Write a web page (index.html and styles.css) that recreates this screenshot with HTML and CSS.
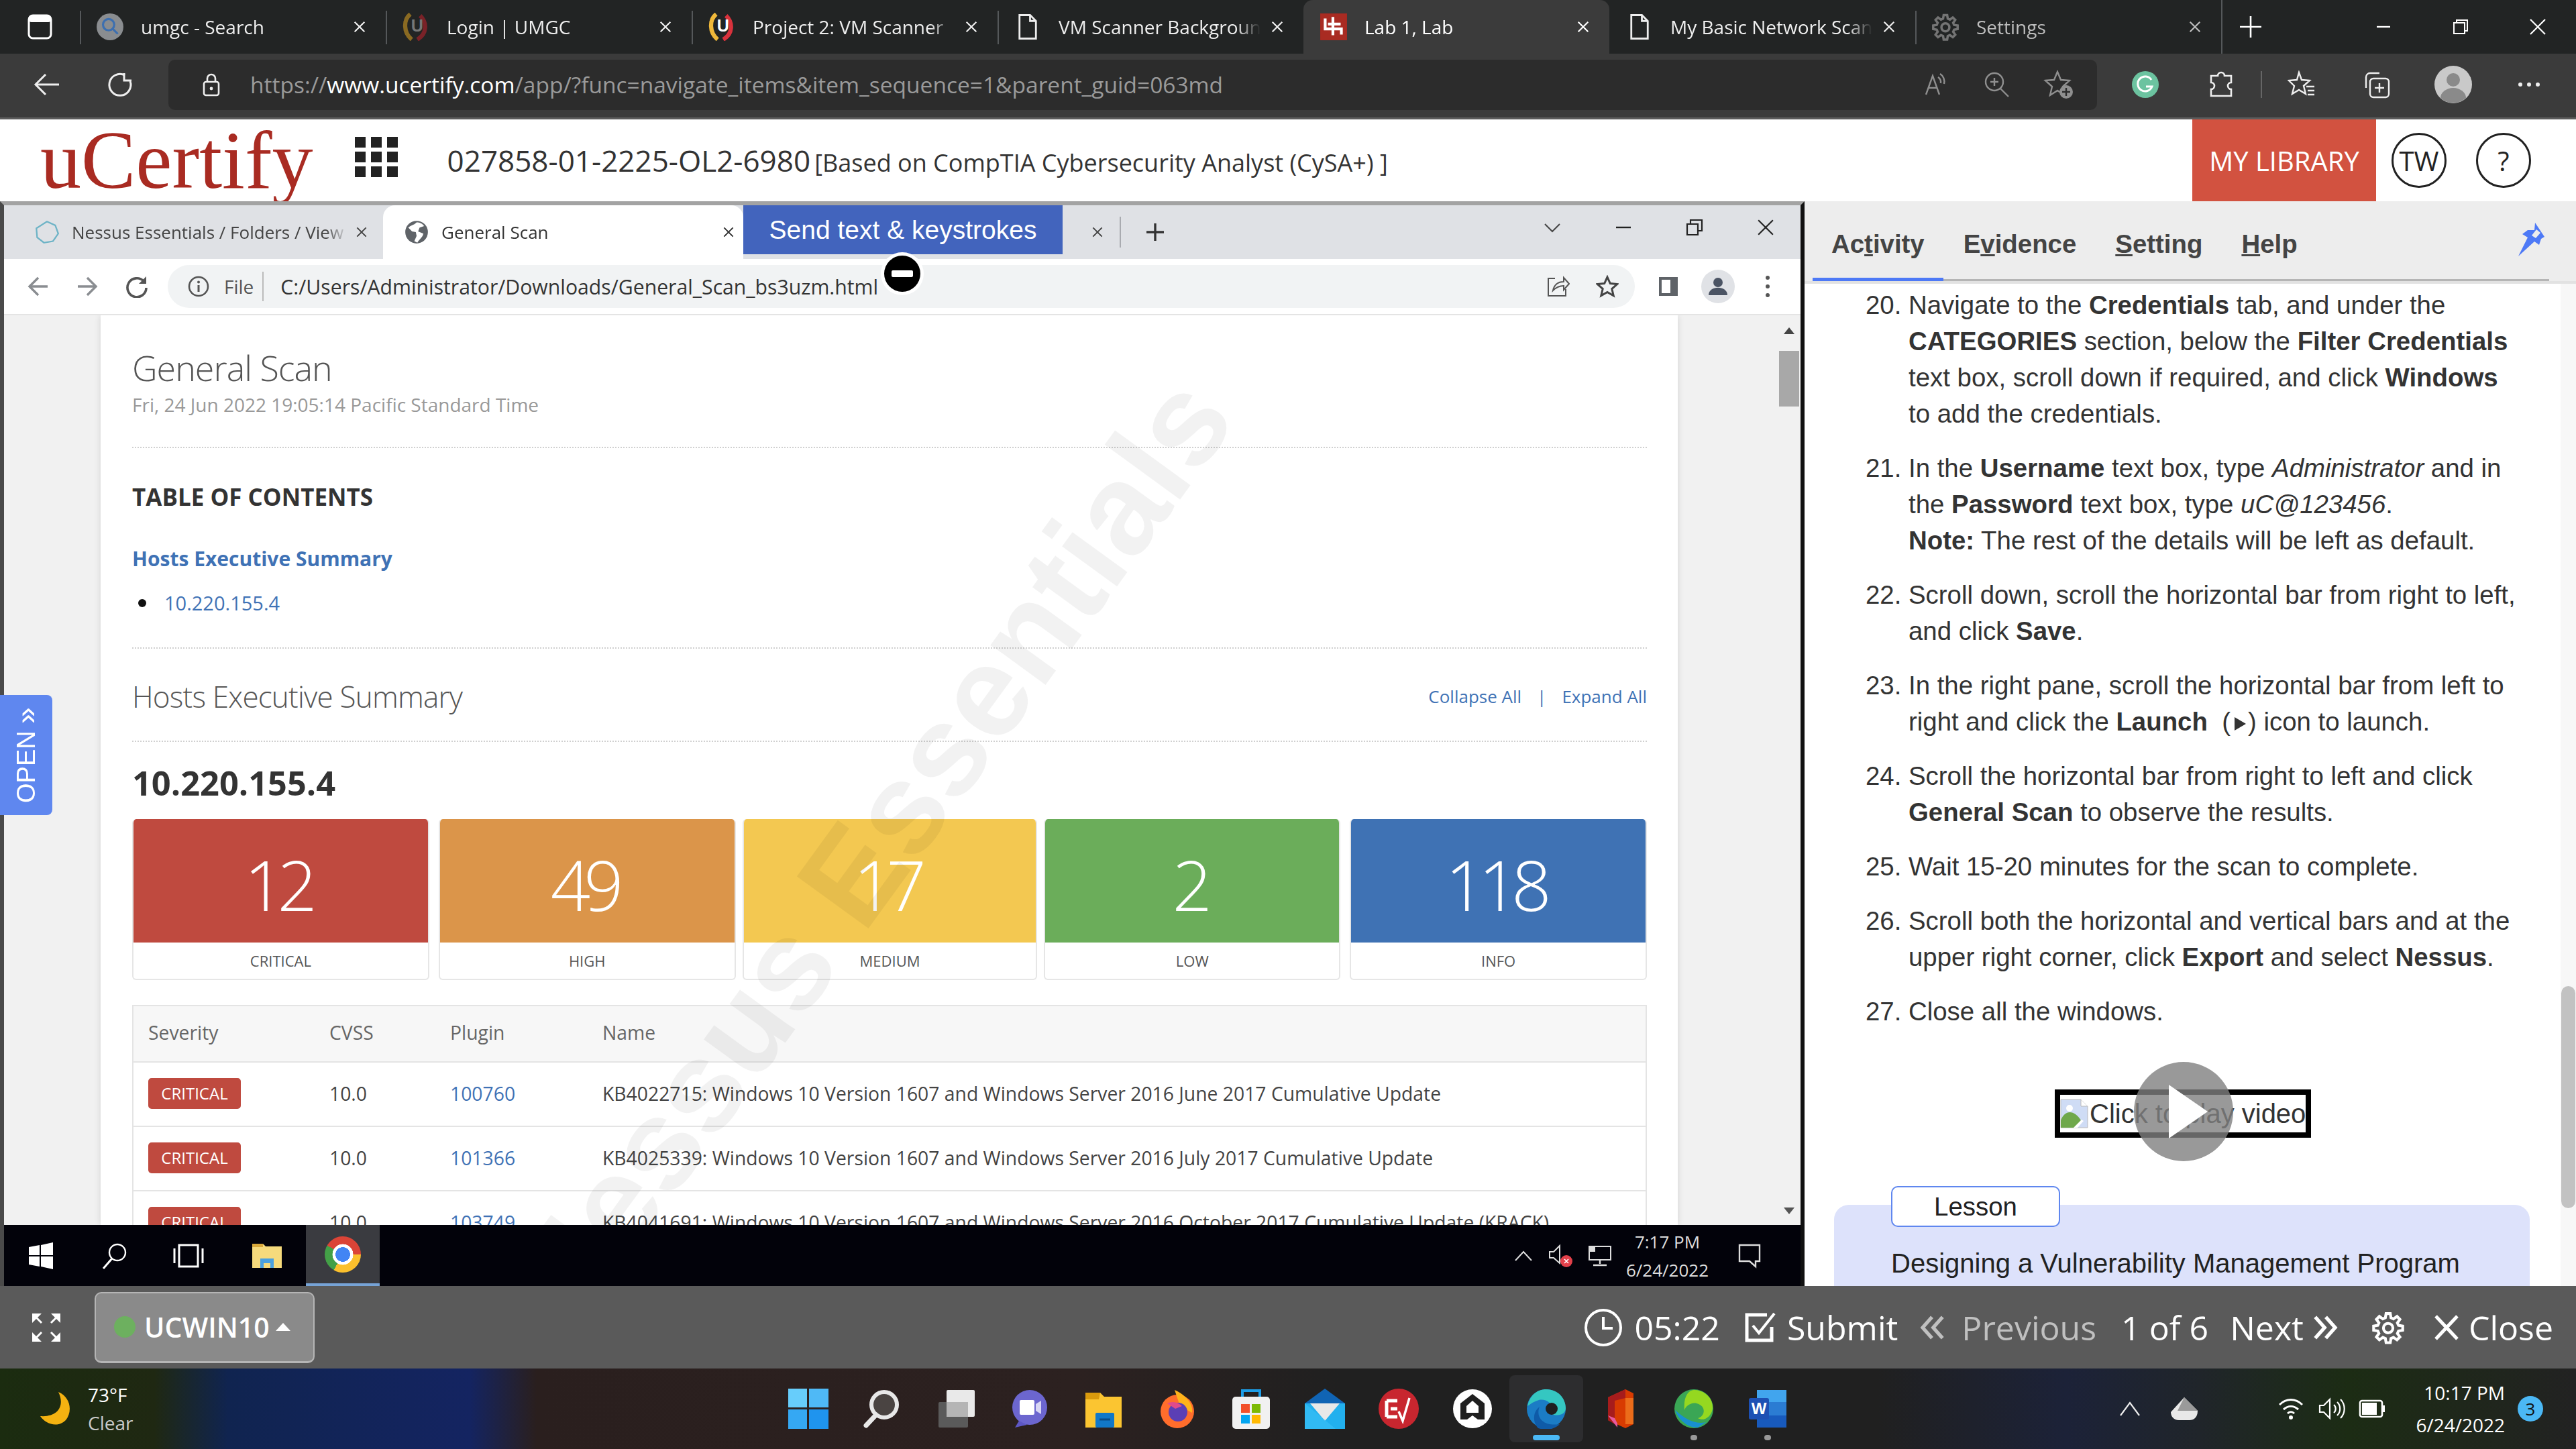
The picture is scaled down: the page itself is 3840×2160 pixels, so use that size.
FILE: index.html
```html
<!DOCTYPE html>
<html lang="en">
<head>
    <meta charset="UTF-8">
    <title>uCertify Lab 1</title>
    <link rel="stylesheet" href="styles.css">
</head>
<body>
    <svg class="sprites" xmlns="http://www.w3.org/2000/svg">
        <symbol id="x" viewBox="0 0 24 24"><path d="M4 4L20 20M20 4L4 20" fill="none" stroke="currentColor" stroke-width="2.4"/></symbol>
        <symbol id="doc" viewBox="0 0 24 24"><path d="M5 2h9l5 5v15H5zM14 2v5h5" fill="none" stroke="currentColor" stroke-width="1.6"/></symbol>
        <symbol id="gear" viewBox="0 0 24 24"><path d="M10.5 2h3l.5 3 1.8.8 2.5-1.8 2.1 2.1-1.8 2.5.8 1.8 3 .5v3l-3 .5-.8 1.8 1.8 2.5-2.1 2.1-2.5-1.8-1.8.8-.5 3h-3l-.5-3-1.8-.8-2.5 1.8-2.1-2.1 1.8-2.5-.8-1.8-3-.5v-3l3-.5.8-1.8-1.8-2.5 2.1-2.1 2.5 1.8 1.8-.8z" fill="none" stroke="currentColor" stroke-width="2"/><circle cx="12" cy="12.4" r="3.4" fill="none" stroke="currentColor" stroke-width="2"/></symbol>
        <symbol id="chev" viewBox="0 0 24 24"><path d="M3 3l8 9-8 9M12 3l8 9-8 9" fill="none" stroke="currentColor" stroke-width="3"/></symbol>
        <symbol id="chevl" viewBox="0 0 24 24"><path d="M21 3l-8 9 8 9M12 3l-8 9 8 9" fill="none" stroke="currentColor" stroke-width="3"/></symbol>
    </svg>

    <!-- Edge tab strip -->
    <div class="tabstrip">
        <div class="strip-start">
            <svg width="38" height="40" viewBox="0 0 38 40"><rect x="2" y="3" width="33" height="34" rx="6" fill="none" stroke="#fff" stroke-width="3"/><rect x="2" y="3" width="33" height="10" rx="4" fill="#fff"/></svg>
        </div>
        <div class="tab">
            <svg class="tab-icon" viewBox="0 0 40 40"><circle cx="20" cy="20" r="19" fill="#8a8d90"/><circle cx="18" cy="17" r="8" fill="none" stroke="#3c6fb0" stroke-width="3"/><path d="M24 23l7 7" stroke="#3c6fb0" stroke-width="3"/></svg>
            <span class="tab-title">umgc - Search</span>
            <svg class="tab-x" width="22" height="22"><use href="#x"/></svg>
        </div>
        <div class="tab">
            <svg class="tab-icon" viewBox="0 0 40 40"><path d="M12 2C2 10 2 28 14 38" fill="none" stroke="#8a6a22" stroke-width="6"/><path d="M26 4C36 14 36 30 22 38" fill="none" stroke="#7a2228" stroke-width="6"/><text x="13" y="27" class="fav-letter fav-dim">U</text></svg>
            <span class="tab-title">Login | UMGC</span>
            <svg class="tab-x" width="22" height="22"><use href="#x"/></svg>
        </div>
        <div class="tab">
            <svg class="tab-icon" viewBox="0 0 40 40"><path d="M12 2C2 10 2 28 14 38" fill="none" stroke="#f0b93a" stroke-width="6"/><path d="M26 4C36 14 36 30 22 38" fill="none" stroke="#d8323c" stroke-width="6"/><text x="13" y="27" class="fav-letter">U</text></svg>
            <span class="tab-title">Project 2: VM Scanner</span>
            <svg class="tab-x" width="22" height="22"><use href="#x"/></svg>
        </div>
        <div class="tab no-sep-right">
            <svg class="tab-icon" viewBox="0 0 24 24"><use href="#doc"/></svg>
            <span class="tab-title">VM Scanner Background</span>
            <svg class="tab-x" width="22" height="22"><use href="#x"/></svg>
        </div>
        <div class="tab tab-active">
            <svg class="tab-icon" viewBox="0 0 40 40"><rect x="1" y="1" width="38" height="38" fill="#a92b22"/><path d="M8 8v15h9M19 6v26M12 16h18M19 23h12v8" fill="none" stroke="#fff" stroke-width="4"/></svg>
            <span class="tab-title">Lab 1, Lab</span>
            <svg class="tab-x" width="22" height="22"><use href="#x"/></svg>
        </div>
        <div class="tab">
            <svg class="tab-icon" viewBox="0 0 24 24"><use href="#doc"/></svg>
            <span class="tab-title">My Basic Network Scan</span>
            <svg class="tab-x" width="22" height="22"><use href="#x"/></svg>
        </div>
        <div class="tab tab-dim">
            <svg class="tab-icon" viewBox="0 0 24 24"><use href="#gear"/></svg>
            <span class="tab-title">Settings</span>
            <svg class="tab-x" width="22" height="22"><use href="#x"/></svg>
        </div>
        <div class="strip-end">
            <svg class="new-tab" width="36" height="36" viewBox="0 0 36 36"><path d="M18 2v32M2 18h32" stroke="#fff" stroke-width="2.6"/></svg>
            <div class="win-btns">
                <svg width="26" height="26" viewBox="0 0 26 26"><path d="M3 13h20" stroke="#fff" stroke-width="2.4"/></svg>
                <svg width="26" height="26" viewBox="0 0 26 26"><path d="M3 7h16v16H3zM7 7V3h16v16h-4" fill="none" stroke="#fff" stroke-width="2"/></svg>
                <svg width="26" height="26" viewBox="0 0 26 26"><path d="M2 2L24 24M24 2L2 24" stroke="#fff" stroke-width="2.2"/></svg>
            </div>
        </div>
    </div>

    <!-- Edge address bar -->
    <div class="toolbar">
        <svg class="tool-back" width="40" height="36" viewBox="0 0 40 36"><path d="M18 3L3 18l15 15M3 18h35" fill="none" stroke="#eee" stroke-width="3"/></svg>
        <svg class="tool-reload" width="40" height="40" viewBox="0 0 40 40"><path d="M26 6a16 16 0 1 0 8 9" fill="none" stroke="#eee" stroke-width="3"/><path d="M25 3v11h11" fill="none" stroke="#eee" stroke-width="3"/></svg>
        <div class="address">
            <svg class="addr-lock" width="28" height="36" viewBox="0 0 28 36"><rect x="3" y="14" width="22" height="20" rx="3" fill="none" stroke="#eee" stroke-width="2.6"/><path d="M8 14V9a6 6 0 0 1 12 0v5" fill="none" stroke="#eee" stroke-width="2.6"/><circle cx="14" cy="24" r="2.4" fill="#eee"/></svg>
            <span class="addr-url">https://<b>www.ucertify.com</b>/app/?func=navigate_items&amp;item_sequence=1&amp;parent_guid=063md</span>
            <div class="addr-tools">
                <svg width="42" height="42" viewBox="0 0 42 42"><path d="M5 36L15 8l10 28M9 26h12M26 5a14 14 0 0 1 6 15M23 10a9 9 0 0 1 4 9" fill="none" stroke="#8f8f8f" stroke-width="2.4"/></svg>
                <svg width="42" height="42" viewBox="0 0 42 42"><circle cx="17" cy="17" r="13" fill="none" stroke="#8f8f8f" stroke-width="2.4"/><path d="M26 27l12 12M11 17h12M17 11v12" fill="none" stroke="#8f8f8f" stroke-width="2.4"/></svg>
                <svg width="46" height="44" viewBox="0 0 46 44"><path d="M21 3l5 12 13 1-10 9 3 13-11-7-11 7 3-13L3 16l13-1z" fill="none" stroke="#8f8f8f" stroke-width="2.4"/><circle cx="34" cy="33" r="10" fill="#8f8f8f"/><path d="M34 27v12M28 33h12" stroke="#2c2c2c" stroke-width="2.4"/></svg>
            </div>
        </div>
        <div class="tool-slot">
            <svg width="40" height="40" viewBox="0 0 40 40"><circle cx="20" cy="20" r="20" fill="#6cc3a0"/><path d="M29 13a11 11 0 1 0 1 10H21" fill="none" stroke="#fff" stroke-width="3"/></svg>
        </div>
        <div class="tool-slot">
            <svg width="42" height="42" viewBox="0 0 42 42"><path d="M16 8a5 5 0 0 1 10 0h10v10a5 5 0 0 0 0 10v10H6V28a5 5 0 0 0 0-10V8z" fill="none" stroke="#eee" stroke-width="2.6"/></svg>
        </div>
        <span class="tool-sep"></span>
        <div class="tool-slot">
            <svg width="42" height="42" viewBox="0 0 42 42"><path d="M17 3l4 11 12 1-9 8 3 12-10-6-10 6 3-12-8-8 12-1zM28 24h12M30 30h10M30 36h10" fill="none" stroke="#eee" stroke-width="2.4"/></svg>
        </div>
        <div class="tool-slot">
            <svg width="42" height="42" viewBox="0 0 42 42"><path d="M24 4H10a6 6 0 0 0-6 6v16" fill="none" stroke="#eee" stroke-width="2.4"/><rect x="10" y="12" width="28" height="28" rx="5" fill="none" stroke="#eee" stroke-width="2.4"/><path d="M24 19v14M17 26h14" stroke="#eee" stroke-width="2.4"/></svg>
        </div>
        <div class="tool-slot">
            <svg width="56" height="56" viewBox="0 0 56 56"><circle cx="28" cy="28" r="28" fill="#c9c9c9"/><circle cx="28" cy="21" r="10" fill="#8a8a8a"/><path d="M9 48a19 15 0 0 1 38 0 28 28 0 0 1-38 0z" fill="#8a8a8a"/></svg>
        </div>
        <div class="tool-slot">
            <svg width="36" height="10" viewBox="0 0 36 10"><circle cx="5" cy="5" r="3" fill="#eee"/><circle cx="18" cy="5" r="3" fill="#eee"/><circle cx="31" cy="5" r="3" fill="#eee"/></svg>
        </div>
    </div>

    <!-- uCertify header -->
    <header class="appbar">
        <span class="logo">uCertify</span>
        <div class="grid-btn">
            <i></i><i></i><i></i><i></i><i></i><i></i><i></i><i></i><i></i>
        </div>
        <div class="course"><span class="course-code">027858-01-2225-OL2-6980</span> <span class="course-name">[Based on CompTIA Cybersecurity Analyst (CySA+) ]</span></div>
        <a class="my-library">MY LIBRARY</a>
        <span class="round-btn">TW</span>
        <span class="round-btn round-help">?</span>
    </header>

    <div class="workspace">
        <!-- Remote desktop view -->
        <section class="remote">
            <div class="rc-tabs">
                <div class="rc-tab">
                    <svg class="rc-fav" viewBox="0 0 32 32"><path d="M16 2l11 5 4 11-7 10-12 2L3 23 2 11z" fill="none" stroke="#6db3c6" stroke-width="2"/></svg>
                    <span class="rc-title">Nessus Essentials / Folders / View Scan</span>
                    <svg class="rc-x" width="20" height="20"><use href="#x"/></svg>
                </div>
                <div class="rc-tab rc-tab-active">
                    <svg class="rc-fav" viewBox="0 0 32 32"><circle cx="16" cy="16" r="15" fill="#5f6368"/><path d="M16 3c-4 4-8 4-11 7l5 5 5 1 1 5-3 7 4 2c3-5 7-7 8-12l-7-3 2-5 6-2c-3-4-6-5-10-5z" fill="#fff"/></svg>
                    <span class="rc-title">General Scan</span>
                    <svg class="rc-x" width="20" height="20"><use href="#x"/></svg>
                </div>
                <div class="rc-hidden-tab">
                    <svg class="rc-x" width="20" height="20"><use href="#x"/></svg>
                </div>
                <span class="rc-sep"></span>
                <svg class="rc-new" width="28" height="28" viewBox="0 0 28 28"><path d="M14 1v26M1 14h26" stroke="#333" stroke-width="3.4"/></svg>
                <div class="rc-winbtns">
                    <svg width="26" height="16" viewBox="0 0 26 16"><path d="M2 3l11 11L24 3" fill="none" stroke="#444" stroke-width="2"/></svg>
                    <svg width="26" height="26" viewBox="0 0 26 26"><path d="M2 13h22" stroke="#222" stroke-width="2.4"/></svg>
                    <svg width="26" height="26" viewBox="0 0 26 26"><path d="M2 8h16v16H2zM7 8V2h17v16h-6" fill="none" stroke="#222" stroke-width="2.2"/></svg>
                    <svg width="26" height="26" viewBox="0 0 24 24"><path d="M2 2L22 22M22 2L2 22" stroke="#222" stroke-width="2"/></svg>
                </div>
            </div>
            <div class="rc-toolbar">
                <svg class="rc-tool rc-dim" width="32" height="32" viewBox="0 0 32 32"><path d="M16 3L3 16l13 13M3 16h27" fill="none" stroke="currentColor" stroke-width="3.4"/></svg>
                <svg class="rc-tool rc-dim" width="32" height="32" viewBox="0 0 32 32"><path d="M16 3l13 13-13 13M29 16H2" fill="none" stroke="currentColor" stroke-width="3.4"/></svg>
                <svg class="rc-tool" width="34" height="34" viewBox="0 0 34 34"><path d="M27 9a14 14 0 1 0 4 10" fill="none" stroke="#555" stroke-width="3.6"/><path d="M31 2v11H20z" fill="#555"/></svg>
                <div class="omnibox">
                    <svg class="omni-info" width="32" height="32" viewBox="0 0 32 32"><circle cx="16" cy="16" r="14" fill="none" stroke="#555" stroke-width="2.6"/><path d="M16 14v10" stroke="#555" stroke-width="3"/><circle cx="16" cy="9.5" r="2" fill="#555"/></svg>
                    <span class="omni-file">File</span>
                    <span class="omni-url">C:/Users/Administrator/Downloads/General_Scan_bs3uzm.html</span>
                    <svg class="omni-share" width="34" height="32" viewBox="0 0 34 32"><path d="M12 4H2v26h26V20M9 22c2-9 8-13 16-13V3l8 9-8 9v-6c-6 0-11 2-16 7z" fill="none" stroke="#555" stroke-width="2"/></svg>
                    <svg class="omni-star" width="34" height="34" viewBox="0 0 34 34"><path d="M17 3l4.300 9.600 10.400 1-7.900 6.900 2.400 10.200L17 25.400l-9.200 5.300 2.400-10.200L2.300 13.600l10.400-1z" fill="none" stroke="#444" stroke-width="3"/></svg>
                </div>
                <div class="rc-slot"><svg width="32" height="32" viewBox="0 0 32 32"><rect x="2" y="2" width="28" height="28" fill="#5f6368"/><rect x="6" y="6" width="13" height="20" fill="#fff"/></svg></div>
                <div class="rc-slot"><svg width="50" height="50" viewBox="0 0 50 50"><circle cx="25" cy="25" r="25" fill="#e0e2e6"/><circle cx="25" cy="19" r="7" fill="#4b5464"/><path d="M11 38c0-15 28-15 28 0z" fill="#4b5464"/></svg></div>
                <div class="rc-slot"><svg width="10" height="34" viewBox="0 0 10 34"><circle cx="5" cy="4" r="3" fill="#555"/><circle cx="5" cy="17" r="3" fill="#555"/><circle cx="5" cy="30" r="3" fill="#555"/></svg></div>
            </div>

            <div class="viewer">
                <main class="sheet">
                    <h1 class="scan-title">General Scan</h1>
                    <p class="scan-date">Fri, 24 Jun 2022 19:05:14 Pacific Standard Time</p>
                    <hr class="dots dots-a">
                    <h2 class="toc-title">TABLE OF CONTENTS</h2>
                    <a class="toc-link">Hosts Executive Summary</a>
                    <ul class="toc-list"><li><a>10.220.155.4</a></li></ul>
                    <hr class="dots dots-b">
                    <div class="section-head">
                        <h2 class="section-title">Hosts Executive Summary</h2>
                        <div class="section-links"><a>Collapse All</a><span>|</span><a>Expand All</a></div>
                    </div>
                    <hr class="dots dots-c">
                    <h3 class="host-ip">10.220.155.4</h3>
                    <div class="cards">
                        <div class="card"><div class="card-num sev-critical">12</div><div class="card-label">CRITICAL</div></div>
                        <div class="card"><div class="card-num sev-high">49</div><div class="card-label">HIGH</div></div>
                        <div class="card"><div class="card-num sev-medium">17</div><div class="card-label">MEDIUM</div></div>
                        <div class="card"><div class="card-num sev-low">2</div><div class="card-label">LOW</div></div>
                        <div class="card"><div class="card-num sev-info">118</div><div class="card-label">INFO</div></div>
                    </div>
                    <table class="vulns">
                        <tr class="vulns-head"><th>Severity</th><th>CVSS</th><th>Plugin</th><th>Name</th></tr>
                        <tr><td><span class="badge">CRITICAL</span></td><td>10.0</td><td><a>100760</a></td><td>KB4022715: Windows 10 Version 1607 and Windows Server 2016 June 2017 Cumulative Update</td></tr>
                        <tr><td><span class="badge">CRITICAL</span></td><td>10.0</td><td><a>101366</a></td><td>KB4025339: Windows 10 Version 1607 and Windows Server 2016 July 2017 Cumulative Update</td></tr>
                        <tr><td><span class="badge">CRITICAL</span></td><td>10.0</td><td><a>103749</a></td><td>KB4041691: Windows 10 Version 1607 and Windows Server 2016 October 2017 Cumulative Update (KRACK)</td></tr>
                    </table>
                </main>
                <div class="rc-scroll">
                    <svg class="scroll-arrow" width="16" height="10" viewBox="0 0 16 10"><path d="M8 0l8 10H0z" fill="#444"/></svg>
                    <div class="rc-thumb"></div>
                    <svg class="scroll-arrow scroll-arrow-down" width="16" height="10" viewBox="0 0 16 10"><path d="M8 10l8-10H0z" fill="#555"/></svg>
                </div>
                <div class="watermark">Nessus Essentials</div>
            </div>

            <div class="rc-taskbar">
                <div class="rc-app">
                    <svg width="40" height="40" viewBox="0 0 40 40"><path d="M2 7l16-3v15H2zM20 4l18-4v19H20zM2 21h16v15L2 33zM20 21h18v19l-18-4z" fill="#fff"/></svg>
                </div>
                <div class="rc-app">
                    <svg width="40" height="42" viewBox="0 0 40 42"><circle cx="24" cy="16" r="12" fill="none" stroke="#fff" stroke-width="2.4"/><path d="M16 25L3 40" stroke="#fff" stroke-width="3"/></svg>
                </div>
                <div class="rc-app">
                    <svg width="48" height="36" viewBox="0 0 48 36"><rect x="10" y="2" width="28" height="32" fill="none" stroke="#fff" stroke-width="3"/><path d="M3 7v22M45 7v22" stroke="#fff" stroke-width="3"/></svg>
                </div>
                <div class="rc-app rc-app-folder">
                    <svg width="48" height="40" viewBox="0 0 48 40"><path d="M2 2h16l4 4h24v32H2z" fill="#f6da7c"/><rect x="2" y="2" width="16" height="5" fill="#d9a93b"/><path d="M14 24h20v14h-5v-7H19v7h-5z" fill="#4aa0df"/></svg>
                </div>
                <div class="rc-app rc-app-active">
                    <span class="chrome-logo"></span>
                </div>
                <div class="rc-tray">
                    <svg width="28" height="18" viewBox="0 0 28 18"><path d="M2 16L14 3l12 13" fill="none" stroke="#ddd" stroke-width="2"/></svg>
                    <svg class="tray-vol" width="40" height="38" viewBox="0 0 40 38"><path d="M3 13h6l9-9v26l-9-8H3z" fill="none" stroke="#ddd" stroke-width="2"/><circle cx="28" cy="27" r="9" fill="#e2404a"/><path d="M25 24l6 6M31 24l-6 6" stroke="#fff" stroke-width="1.6"/></svg>
                    <svg class="tray-net" width="36" height="36" viewBox="0 0 36 36"><rect x="2" y="4" width="32" height="20" fill="none" stroke="#ddd" stroke-width="2"/><path d="M18 24v6M8 32h20" stroke="#ddd" stroke-width="2.4"/><rect x="2" y="4" width="9" height="8" fill="#ddd"/></svg>
                    <div class="rc-clock"><span>7:17 PM</span><span>6/24/2022</span></div>
                    <svg class="tray-note" width="36" height="38" viewBox="0 0 36 38"><path d="M3 3h30v24h-6v8l-9-8H3z" fill="none" stroke="#ddd" stroke-width="2.4"/></svg>
                </div>
            </div>

            <!-- overlays from the remote session -->
            <div class="send-keys">Send text &amp; keystrokes</div>
            <div class="no-cursor"><span></span></div>
            <div class="open-tab">OPEN <span class="open-chev">»</span></div>
        </section>

        <!-- Lab steps -->
        <aside class="panel">
            <nav class="panel-tabs">
                <a class="panel-tab panel-tab-on">Ac<u>t</u>ivity</a>
                <a class="panel-tab">E<u>v</u>idence</a>
                <a class="panel-tab"><u>S</u>etting</a>
                <a class="panel-tab"><u>H</u>elp</a>
                <svg class="pin" width="52" height="50" viewBox="0 0 52 50"><path d="M27 0l14 21-5 3-3 9-7-5L2 50l14-28-8-5 8-6h10zM29 10l-7 9 6 4 7-8z" fill="#4d79f6" fill-rule="evenodd"/></svg>
            </nav>
            <div class="steps-wrap">
                <ol class="steps" start="20">
                    <li>Navigate to the <b>Credentials</b> tab, and under the <b>CATEGORIES</b> section, below the <b>Filter Credentials</b> text box, scroll down if required, and click <b>Windows</b> to add the credentials.</li>
                    <li>In the <b>Username</b> text box, type <i>Administrator</i> and in the <b>Password</b> text box, type <i>uC@123456</i>.<br><b>Note:</b> The rest of the details will be left as default.</li>
                    <li>Scroll down, scroll the horizontal bar from right to left, and click <b>Save</b>.</li>
                    <li>In the right pane, scroll the horizontal bar from left to right and click the <b>Launch</b> &nbsp;(<svg class="launch-ico" width="26" height="26" viewBox="0 0 26 26"><path d="M6 3l17 10L6 23z" fill="#333"/></svg>) icon to launch.</li>
                    <li>Scroll the horizontal bar from right to left and click <b>General Scan</b> to observe the results.</li>
                    <li>Wait 15-20 minutes for the scan to complete.</li>
                    <li>Scroll both the horizontal and vertical bars and at the upper right corner, click <b>Export</b> and select <b>Nessus</b>.</li>
                    <li>Close all the windows.</li>
                </ol>
                <div class="video-row">
                    <div class="video-box">
                        <svg width="42" height="44" viewBox="0 0 42 44"><path d="M1 1h30l10 10v32H1z" fill="#cfdcf5" stroke="#bbb"/><path d="M31 1v10h10" fill="#fff" stroke="#bbb"/><path d="M1 43V32c6-16 20-16 30 0l-8 11z" fill="#6fa84b"/><path d="M20 43l12-12 3 2-9 10z" fill="#fff"/><circle cx="14" cy="14" r="5" fill="#fff"/></svg>
                        <span>Click to play video</span>
                        <div class="play-btn"><svg width="58" height="80" viewBox="0 0 58 80"><path d="M0 0l58 40L0 80z" fill="#fff"/></svg></div>
                    </div>
                </div>
                <div class="lesson">
                    <div class="lesson-tab">Lesson</div>
                    <p class="lesson-name">Designing a Vulnerability Management Program</p>
                </div>
                <div class="panel-scroll"><div class="panel-thumb"></div></div>
            </div>
        </aside>
    </div>

    <!-- Lab control bar -->
    <footer class="controlbar">
        <svg class="ctl-expand" width="46" height="46" viewBox="0 0 46 46"><path d="M2 2h14L2 16zM44 2H30l14 14zM2 44h14L2 30zM44 44H30l14-14z" fill="#fff"/><path d="M8 8l8 8M38 8l-8 8M8 38l8-8M38 38l-8-8" stroke="#fff" stroke-width="3"/></svg>
        <div class="vm-btn"><span class="vm-dot"></span><span>UCWIN10</span><span class="vm-caret"></span></div>
        <div class="ctl-items">
            <div class="ctl">
                <svg width="58" height="58" viewBox="0 0 58 58"><circle cx="29" cy="29" r="26" fill="none" stroke="#fff" stroke-width="4"/><path d="M29 13v17h14" fill="none" stroke="#fff" stroke-width="4"/></svg>
                <span>05:22</span>
            </div>
            <div class="ctl ctl-tight">
                <svg width="50" height="46" viewBox="0 0 50 46"><path d="M40 22v20H3V4h30" fill="none" stroke="#fff" stroke-width="5"/><path d="M12 20l9 11L44 2" fill="none" stroke="#fff" stroke-width="4"/></svg>
                <span>Submit</span>
            </div>
            <div class="ctl ctl-off">
                <svg width="42" height="46"><use href="#chevl"/></svg>
                <span>Previous</span>
            </div>
            <div class="ctl"><span>1 of 6</span></div>
            <div class="ctl ctl-next">
                <span>Next</span>
                <svg width="42" height="46"><use href="#chev"/></svg>
            </div>
            <svg class="ctl-gear" width="50" height="50"><use href="#gear"/></svg>
            <div class="ctl ctl-close">
                <svg width="38" height="40" viewBox="0 0 38 40"><path d="M3 3L35 37M35 3L3 37" stroke="#fff" stroke-width="5"/></svg>
                <span>Close</span>
            </div>
        </div>
    </footer>

    <!-- Windows 11 taskbar -->
    <div class="taskbar">
        <div class="weather">
            <svg width="56" height="56" viewBox="0 0 56 56"><path d="M33 3c10 20 0 38-27 36 8 12 26 18 38 6 10-12 8-34-11-42z" fill="#f4b211"/></svg>
            <div class="weather-text"><span>73°F</span><span class="weather-dim">Clear</span></div>
        </div>
        <div class="tb-app">
            <svg width="60" height="60" viewBox="0 0 60 60"><rect width="28" height="28" fill="#67cdfb"/><rect x="31" width="29" height="28" fill="#4fb9f6"/><rect y="31" width="28" height="29" fill="#35a8f3"/><rect x="31" y="31" width="29" height="29" fill="#1f94ee"/></svg>
        </div>
        <div class="tb-app">
            <svg width="60" height="60" viewBox="0 0 60 60"><circle cx="33" cy="24" r="19" fill="#4a4442" stroke="#e8e8e8" stroke-width="6"/><path d="M21 39L6 55" stroke="#e8e8e8" stroke-width="7" stroke-linecap="round"/></svg>
        </div>
        <div class="tb-app">
            <svg width="60" height="60" viewBox="0 0 60 60"><rect x="4" y="20" width="44" height="38" rx="2" fill="#5a5a5a"/><rect x="16" y="2" width="42" height="40" rx="2" fill="#e9e9e9"/><rect x="16" y="20" width="32" height="22" fill="#b5b5b5"/></svg>
        </div>
        <div class="tb-app">
            <svg width="60" height="60" viewBox="0 0 60 60"><circle cx="30" cy="28" r="26" fill="#6c66cf"/><path d="M14 48l-6 10 18-4z" fill="#5d57c4"/><rect x="15" y="17" width="22" height="22" rx="2" fill="#fff"/><path d="M39 23l8-5v20l-8-5z" fill="#d8d6f4"/></svg>
        </div>
        <div class="tb-app">
            <svg width="60" height="60" viewBox="0 0 60 60"><path d="M3 6h22l6 6h26v46H3z" fill="#fbc531"/><path d="M3 6h22l-2 10H3z" fill="#d99a0d"/><rect x="18" y="36" width="28" height="22" rx="2" fill="#1178c8"/><path d="M24 46h16" stroke="#0b4d88" stroke-width="3"/></svg>
        </div>
        <div class="tb-app">
            <svg width="60" height="60" viewBox="0 0 60 60"><circle cx="30" cy="34" r="25" fill="#ff6d2c"/><path d="M26 2c18 8 28 22 26 34L34 26z" fill="#ffb31a"/><circle cx="31" cy="35" r="14" fill="#5b3fb5"/><path d="M15 22c8-4 16-2 22 4l-10 4z" fill="#e04a8c"/></svg>
        </div>
        <div class="tb-app">
            <svg width="62" height="62" viewBox="0 0 62 62"><path d="M18 14V4h26v10" fill="none" stroke="#1d9ee8" stroke-width="4"/><rect x="3" y="13" width="56" height="48" rx="5" fill="#f1f1f1"/><rect x="16" y="24" width="13" height="13" fill="#f2502a"/><rect x="32" y="24" width="13" height="13" fill="#7cba05"/><rect x="16" y="40" width="13" height="13" fill="#03a5f0"/><rect x="32" y="40" width="13" height="13" fill="#ffb902"/></svg>
        </div>
        <div class="tb-app">
            <svg width="60" height="60" viewBox="0 0 60 60"><path d="M30 0l30 22v38H0V22z" fill="#1064b4"/><path d="M0 22h60v38H0z" fill="#22b0ee"/><path d="M8 22h44L30 48z" fill="#e8e8e8"/><path d="M0 22l46 38H0z" fill="#37bff5" opacity=".7"/></svg>
        </div>
        <div class="tb-app">
            <svg width="60" height="60" viewBox="0 0 60 60"><circle cx="30" cy="30" r="30" fill="#c8262f"/><path d="M12 18h16M18 30h10M12 42h16M12 18v24" fill="none" stroke="#fff" stroke-width="5"/><path d="M30 34l6 14 10-34" fill="none" stroke="#fff" stroke-width="3.5"/></svg>
        </div>
        <div class="tb-app">
            <svg width="60" height="60" viewBox="0 0 60 60"><circle cx="30" cy="30" r="29" fill="#fff"/><path d="M30 8L12 22v24h10l8-6 8 6h10V22z" fill="#1f1f1f"/><path d="M30 18l-9 8v10h18V26z" fill="#fff"/></svg>
        </div>
        <div class="tb-app tb-app-active">
            <svg width="60" height="60" viewBox="0 0 60 60"><circle cx="30" cy="30" r="29" fill="#1b7cc5"/><path d="M2 26C6 8 18 1 30 1c18 0 29 14 29 28 0 8-8 12-18 10-5-1-2-4-2-8 0-10-10-16-20-14C11 19 5 24 2 26z" fill="#35c7c1"/><circle cx="38" cy="30" r="9" fill="#1f1f1f"/><path d="M18 59c-8-8-9-24 2-32-6 14 4 30 30 26-8 8-20 10-32 6z" fill="#0f5ba8"/></svg>
            <span class="tb-pill"></span>
        </div>
        <div class="tb-app">
            <svg width="60" height="60" viewBox="0 0 60 60"><path d="M38 1L12 13v34l26 12 12-6V7z" fill="#d83b01"/><path d="M38 1L12 13v34l10 6V18l16-4z" fill="#a61c1c"/><path d="M12 40l14 18v-6l-4-8z" fill="#e65a9e"/><path d="M38 14h12v39H38z" fill="#eb6c1a"/></svg>
        </div>
        <div class="tb-app">
            <svg width="60" height="60" viewBox="0 0 60 60"><circle cx="30" cy="30" r="29" fill="#3aa655"/><path d="M30 2c16 0 28 12 28 26 0 12-12 22-22 16 10-2 14-18-2-22-8-2-16 4-18 10C14 12 22 2 30 2z" fill="#95d820"/><path d="M2 32c4 12 16 26 34 26l12-8C30 54 16 44 2 32z" fill="#1990cf"/></svg>
            <span class="tb-dot"></span>
        </div>
        <div class="tb-app">
            <svg width="60" height="60" viewBox="0 0 60 60"><rect x="14" y="2" width="44" height="56" rx="3" fill="#2b7cd3"/><rect x="14" y="2" width="44" height="18" fill="#41a5ee"/><rect x="14" y="40" width="44" height="18" fill="#185abd"/><rect x="2" y="14" width="30" height="32" rx="3" fill="#1d50b4"/><text x="17" y="38" class="word-w">W</text></svg>
            <span class="tb-dot"></span>
        </div>
        <div class="win-tray">
            <svg width="34" height="24" viewBox="0 0 34 24"><path d="M3 22L17 3l14 19" fill="none" stroke="#eee" stroke-width="2.2"/></svg>
            <svg class="tray-cloud" width="44" height="38" viewBox="0 0 44 38"><path d="M22 2l20 20c0 10-6 14-12 14H14C6 36 2 30 2 24z" fill="#e8e8e8"/><path d="M22 2l20 20H12z" fill="#9a9a9a"/></svg>
            <svg class="tray-wifi" width="40" height="36" viewBox="0 0 40 36"><path d="M3 12c10-10 24-10 34 0M9 19c7-6 15-6 22 0M15 25c3-3 7-3 10 0" fill="none" stroke="#fff" stroke-width="3"/><circle cx="20" cy="31" r="3" fill="#fff"/></svg>
            <svg class="tray-sound" width="40" height="36" viewBox="0 0 40 36"><path d="M2 13h6l9-9v28l-9-9H2z" fill="none" stroke="#fff" stroke-width="2.2"/><path d="M23 12a8 8 0 0 1 0 12M28 8a14 14 0 0 1 0 20M33 4a20 20 0 0 1 0 28" fill="none" stroke="#fff" stroke-width="2.2"/></svg>
            <svg class="tray-batt" width="40" height="28" viewBox="0 0 40 28"><rect x="2" y="2" width="33" height="24" rx="3" fill="none" stroke="#fff" stroke-width="2.6"/><rect x="5" y="5" width="22" height="18" fill="#fff"/><rect x="36" y="9" width="3" height="10" fill="#fff"/></svg>
            <div class="win-clock"><span>10:17 PM</span><span>6/24/2022</span></div>
            <span class="notif-count">3</span>
        </div>
    </div>
</body>
</html>
```

FILE: styles.css
```css
* {
    box-sizing: border-box;
}

html, body {
    margin: 0;
    padding: 0;
}

body {
    width: 3840px;
    height: 2160px;
    overflow: hidden;
    display: flex;
    flex-direction: column;
    background: #fff;
    font-family: 'Open Sans', 'Liberation Sans', sans-serif;
}

svg {
    display: block;
    flex: none;
}

.sprites {
    display: none;
}

/* Edge tab strip */
.tabstrip {
    height: 80px;
    display: flex;
    align-items: center;
    background: #222424;
    color: #fff;
}

.strip-start {
    width: 119px;
    padding-left: 41px;
}

.tab {
    width: 456px;
    height: 80px;
    padding: 0 28px 0 24px;
    display: flex;
    align-items: center;
    position: relative;
    font-size: 28px;
    color: #eee;
}

.tab::before {
    content: "";
    position: absolute;
    left: 0;
    top: 16px;
    bottom: 14px;
    width: 2px;
    background: #55585a;
}

.tab-active {
    background: #3b3b3b;
    border-radius: 14px 14px 0 0;
    color: #fff;
}

.tab-active::before,
.tab-active + .tab::before {
    display: none;
}

.tab-dim {
    color: #bdbdbd;
}

.tab-dim .tab-icon {
    color: #747474;
}

.tab-icon {
    width: 42px;
    height: 42px;
    margin-right: 25px;
}

.tab-title {
    flex: 1;
    overflow: hidden;
    white-space: nowrap;
    -webkit-mask-image: linear-gradient(to right, #000 88%, transparent 100%);
    mask-image: linear-gradient(to right, #000 88%, transparent 100%);
}

.tab-x {
    margin-left: 14px;
}

.fav-letter {
    font: bold 24px 'Liberation Sans', sans-serif;
    fill: #fff;
}

.fav-dim {
    fill: #777;
}

.strip-end {
    flex: 1;
    height: 80px;
    display: flex;
    align-items: center;
    position: relative;
    border-left: 2px solid #55585a;
    background-clip: padding-box;
}

.new-tab {
    margin-left: 24px;
}

.win-btns {
    display: flex;
    align-items: center;
    gap: 89px;
    margin-left: 167px;
}

/* Edge address bar */
.toolbar {
    height: 98px;
    padding-bottom: 3px;
    display: flex;
    align-items: center;
    background: #3b3b3b;
    border-bottom: 3px solid #5c5c5c;
}

.tool-back {
    margin-left: 50px;
}

.tool-reload {
    margin-left: 70px;
}

.address {
    width: 2875px;
    height: 75px;
    margin-left: 51px;
    padding: 0 34px 0 50px;
    display: flex;
    align-items: center;
    background: #2c2c2c;
    border-radius: 10px;
}

.addr-url {
    margin-left: 44px;
    font-size: 33.5px;
    color: #9a9a9a;
    white-space: nowrap;
}

.addr-url b {
    font-weight: 400;
    color: #fff;
}

.addr-tools {
    margin-left: auto;
    display: flex;
    align-items: center;
    gap: 48px;
}

.tool-slot {
    width: 113px;
    display: flex;
    justify-content: center;
}

.address + .tool-slot {
    margin-left: 15px;
}

.tool-sep {
    width: 2px;
    height: 40px;
    margin: 0 2px 0 3px;
    background: #666;
}

/* uCertify header */
.appbar {
    height: 122px;
    display: flex;
    align-items: center;
    background: #fff;
}

.logo {
    margin-left: 60px;
    font: 122px/122px 'Liberation Serif', serif;
    color: #a92b22;
}

.grid-btn {
    width: 64px;
    margin: 0 0 10px 62px;
    display: grid;
    grid-template-columns: repeat(3, 16px);
    grid-auto-rows: 16px;
    gap: 6px;
    justify-content: space-between;
}

.grid-btn i {
    background: #222;
}

.course {
    margin-left: 74px;
    white-space: nowrap;
    color: #333;
}

.course-code {
    font-size: 44px;
}

.course-name {
    margin-left: 2px;
    font-size: 36px;
}

.my-library {
    width: 274px;
    height: 122px;
    margin-left: auto;
    display: flex;
    align-items: center;
    justify-content: center;
    background: #d25240;
    color: #fff;
    font-size: 40px;
}

.round-btn {
    width: 82px;
    height: 82px;
    margin-left: 23px;
    display: flex;
    align-items: center;
    justify-content: center;
    border: 3px solid #222;
    border-radius: 50%;
    font-size: 40px;
    color: #222;
}

.round-help {
    margin: 0 67px 0 44px;
}

/* Main area */
.workspace {
    height: 1617px;
    display: flex;
}

.remote {
    width: 2690px;
    position: relative;
    display: flex;
    flex-direction: column;
    border-top: 6px solid #a3a3a3;
    border-left: 6px solid #4a4a4a;
    border-right: 6px solid #111;
    background: #fff;
}

.rc-tabs {
    height: 80px;
    display: flex;
    align-items: center;
    background: #dfe1e5;
    color: #444;
    font-size: 26px;
}

.rc-tab {
    width: 565px;
    height: 80px;
    padding: 0 22px 0 46px;
    display: flex;
    align-items: center;
}

.rc-tab-active {
    width: 537px;
    padding: 0 12px 0 32px;
    background: #fff;
    border-radius: 18px 18px 0 0;
    color: #333;
}

.rc-fav {
    width: 36px;
    height: 36px;
    margin-right: 19px;
}

.rc-title {
    flex: 1;
    overflow: hidden;
    white-space: nowrap;
    -webkit-mask-image: linear-gradient(to right, #000 92%, transparent 100%);
    mask-image: linear-gradient(to right, #000 92%, transparent 100%);
}

.rc-tab .rc-x {
    margin-left: 10px;
}

.rc-hidden-tab {
    width: 538px;
    display: flex;
    justify-content: flex-end;
    padding-right: 0;
}

.rc-sep {
    width: 2px;
    height: 46px;
    margin-left: 23px;
    background: #a9abb0;
}

.rc-new {
    margin-left: 37px;
}

.rc-winbtns {
    margin-left: 565px;
    padding-bottom: 14px;
    display: flex;
    align-items: center;
    gap: 80px;
}

.rc-toolbar {
    height: 84px;
    display: flex;
    align-items: center;
    padding-left: 35px;
    background: #fff;
    border-bottom: 2px solid #e4e4e4;
}

.rc-tool {
    margin-right: 41px;
}

.rc-dim {
    color: #8a8d91;
}

.omnibox {
    width: 2187px;
    height: 64px;
    margin-left: -12px;
    padding: 0 24px 0 30px;
    display: flex;
    align-items: center;
    background: #f1f3f4;
    border-radius: 32px;
    font-size: 30.2px;
    color: #333;
}

.omni-file {
    margin-left: 22px;
    padding-right: 13px;
    border-right: 2px solid #bbb;
    color: #555;
    font-size: 28px;
    line-height: 44px;
}

.omni-url {
    margin-left: 25px;
    white-space: nowrap;
}

.omni-share {
    margin-left: auto;
}

.omni-star {
    margin-left: 39px;
}

.rc-slot {
    width: 74px;
    display: flex;
    justify-content: center;
}

.omnibox + .rc-slot {
    margin-left: 13px;
}

.viewer {
    flex: 1;
    min-height: 0;
    position: relative;
    overflow: hidden;
    display: flex;
    background: #f1f1f1;
}

.sheet {
    width: 2351px;
    height: 100%;
    margin-left: 144px;
    padding: 45px 46px 0 47px;
    overflow: hidden;
    background: #fff;
    box-shadow: 0 0 10px rgba(0, 0, 0, 0.12);
    color: #333;
    font-size: 28px;
}

.sheet a {
    color: #3f72b5;
}

.scan-title {
    margin: 0 0 4px;
    font-size: 52px;
    letter-spacing: -1px;
    line-height: 66px;
    font-weight: 300;
    color: #555;
}

.scan-date {
    margin: 0;
    font-size: 28px;
    line-height: 36px;
    color: #999;
}

.dots {
    margin: 0;
    height: 0;
    border: 0;
    border-top: 2px dotted #d0d0d0;
}

.dots-a { margin-top: 45px; }
.dots-b { margin-top: 46px; }
.dots-c { margin-top: 32px; }

.toc-title {
    margin: 51px 0 0;
    font-size: 35px;
    line-height: 44px;
    font-weight: 700;
    color: #333;
}

.toc-link {
    display: block;
    margin-top: 50px;
    font-size: 30px;
    line-height: 40px;
    font-weight: 700;
}

.toc-list {
    margin: 26px 0 0;
    padding: 0;
    list-style: none;
    font-size: 29px;
    line-height: 40px;
}

.toc-list li {
    display: flex;
    align-items: center;
}

.toc-list li::before {
    content: "";
    width: 12px;
    height: 12px;
    margin: 0 27px 0 9px;
    border-radius: 50%;
    background: #111;
}

.section-head {
    height: 64px;
    margin-top: 41px;
    padding-bottom: 4px;
    display: flex;
    align-items: center;
    justify-content: space-between;
}

.section-title {
    margin: 0;
    font-size: 44px;
    letter-spacing: -0.8px;
    line-height: 60px;
    font-weight: 300;
    color: #555;
}

.section-links {
    display: flex;
    gap: 23px;
    font-size: 26px;
}

.section-links span {
    color: #3f72b5;
}

.host-ip {
    margin: 27px 0 0;
    font-size: 50.5px;
    line-height: 68px;
    font-weight: 700;
    color: #333;
}

.cards {
    margin-top: 20px;
    display: flex;
    gap: 10px;
}

.card {
    width: 443px;
    height: 240px;
    border: 2px solid #e6e6e6;
    border-top: 0;
    border-radius: 6px;
    overflow: hidden;
    text-align: center;
}

.card:nth-child(2),
.card:nth-child(5) {
    margin-left: 4px;
}

.card:nth-child(3) {
    width: 440px;
}

.card:nth-child(4) {
    width: 442px;
}

.card-num {
    height: 184px;
    margin: 0 -2px;
    padding-right: 10px;
    font-size: 104px;
    letter-spacing: -10px;
    line-height: 194px;
    font-weight: 300;
    color: #fff;
}

.card-label {
    font-size: 22px;
    line-height: 54px;
    color: #555;
}

.sev-critical { background: #bf4a3f; }
.sev-high { background: #db954a; }
.sev-medium { background: #f3c851; }
.sev-low { background: #6bad5a; }
.sev-info { background: #3f72b4; }

.vulns {
    width: 100%;
    margin-top: 37px;
    border-collapse: collapse;
    border: 2px solid #e4e4e4;
    table-layout: fixed;
    font-size: 28.3px;
}

.vulns th {
    height: 84px;
    padding: 0 0 4px 22px;
    font-weight: 400;
    text-align: left;
    color: #666;
    background: #f7f7f7;
}

.vulns td {
    height: 96px;
    padding: 0 0 3px 22px;
    border-top: 2px solid #e4e4e4;
    white-space: nowrap;
    color: #444;
}

.vulns th:nth-child(1) { width: 271px; }
.vulns th:nth-child(2) { width: 180px; }
.vulns th:nth-child(3) { width: 227px; }

.badge {
    display: inline-block;
    width: 138px;
    height: 46px;
    border-radius: 5px;
    background: #bf4a3f;
    color: #fff;
    font-size: 24px;
    line-height: 46px;
    text-align: center;
    vertical-align: middle;
}

.rc-scroll {
    position: absolute;
    top: 0;
    right: 0;
    bottom: 0;
    width: 34px;
    display: flex;
    flex-direction: column;
    align-items: center;
    padding-top: 18px;
}

.rc-thumb {
    width: 30px;
    height: 83px;
    margin-top: 25px;
    background: #a8a8a8;
}

.scroll-arrow-down {
    margin-top: auto;
    margin-bottom: 16px;
}

.watermark {
    position: absolute;
    left: 1290px;
    top: 799px;
    transform: translate(-50%, -50%) rotate(-54deg);
    font: bold 192px 'Liberation Sans', sans-serif;
    color: rgba(0, 0, 0, 0.05);
    white-space: nowrap;
    pointer-events: none;
}

.rc-taskbar {
    height: 91px;
    display: flex;
    align-items: center;
    background: #02020a;
    color: #ddd;
}

.rc-app {
    width: 110px;
    height: 91px;
    display: flex;
    align-items: center;
    justify-content: center;
}

.rc-app-folder {
    margin-left: 7px;
}

.rc-app-active {
    margin-left: 3px;
    background: #3a3b40;
    border-bottom: 4px solid #76a3d6;
}

.chrome-logo {
    width: 54px;
    height: 54px;
    border-radius: 50%;
    background:
        radial-gradient(circle, #4285f4 0 28%, #fff 29% 40%, transparent 41%),
        conic-gradient(from 90deg, #fbc02d 0 120deg, #43a047 120deg 210deg, #db4437 210deg 360deg);
}

.rc-tray {
    flex: 1;
    display: flex;
    align-items: center;
    justify-content: flex-end;
    padding-right: 58px;
}

.tray-vol {
    margin-left: 22px;
}

.tray-net {
    margin-left: 20px;
}

.rc-clock {
    width: 135px;
    margin-left: 15px;
    display: flex;
    flex-direction: column;
    gap: 10px;
    align-items: center;
    font-size: 26px;
    line-height: 32px;
}

.tray-note {
    margin-left: 37px;
}

/* Overlays in the remote session */
.send-keys {
    position: absolute;
    left: 1102px;
    top: 0;
    width: 476px;
    height: 73px;
    display: flex;
    align-items: center;
    justify-content: center;
    background: #4264bd;
    color: #fff;
    font: 39px 'Liberation Sans', sans-serif;
}

.no-cursor {
    position: absolute;
    left: 1312px;
    top: 75px;
    width: 54px;
    height: 54px;
    display: flex;
    align-items: center;
    justify-content: center;
    background: #000;
    border-radius: 50%;
    box-shadow: 0 0 0 5px #fff;
}

.no-cursor span {
    width: 32px;
    height: 10px;
    background: #fff;
    border-radius: 2px;
}

.open-tab {
    position: absolute;
    left: -6px;
    top: 730px;
    width: 78px;
    height: 179px;
    display: flex;
    align-items: center;
    justify-content: center;
    gap: 10px;
    writing-mode: vertical-rl;
    transform: rotate(180deg);
    background: #5f87ef;
    border-radius: 8px 0 0 8px;
    color: #fff;
    font: 38px 'Liberation Sans', sans-serif;
}

.open-chev {
    font-size: 44px;
}

/* Lab steps panel */
.panel {
    flex: 1;
    min-width: 0;
    display: flex;
    flex-direction: column;
    background: #fff;
    color: #333;
    font: 38.4px 'Liberation Sans', Arial, sans-serif;
}

.panel-tabs {
    height: 123px;
    padding: 8px 0 0 40px;
    position: relative;
    display: flex;
    gap: 58px;
    background: #ededed;
    border-bottom: 4px solid #e2e2e2;
}

.panel-tab {
    padding: 0 28px;
    margin: 0 -28px;
    position: relative;
    display: flex;
    align-items: center;
    font-weight: 700;
    color: #444;
}

.panel-tabs::after {
    content: "";
    position: absolute;
    left: 12px;
    right: 40px;
    bottom: 0;
    height: 3px;
    background: #b5b5b5;
}

.panel-tab-on::after {
    content: "";
    position: absolute;
    left: 0;
    right: 0;
    bottom: 0;
    height: 5px;
    background: #4d79f6;
    z-index: 1;
}

.pin {
    position: absolute;
    right: 36px;
    top: 32px;
}

.steps-wrap {
    flex: 1;
    min-height: 0;
    position: relative;
    overflow: hidden;
    display: flex;
    flex-direction: column;
    padding-right: 23px;
}

.steps {
    margin: 5px 0 0;
    padding: 0 57px 0 155px;
    line-height: 54px;
}

.steps li {
    margin-bottom: 27px;
}

.steps li:last-child {
    margin-bottom: 0;
}

.launch-ico {
    display: inline-block;
    vertical-align: -3px;
}

.video-row {
    margin-top: 89px;
    display: flex;
    justify-content: center;
    padding-left: 1px;
}

.video-box {
    width: 382px;
    height: 72px;
    position: relative;
    display: flex;
    align-items: center;
    border: 8px solid #000;
    background: #fff;
    white-space: nowrap;
    font-size: 40px;
}

.video-box span {
    margin-left: 2px;
}

.play-btn {
    position: absolute;
    left: 110px;
    top: -49px;
    width: 148px;
    height: 148px;
    display: flex;
    align-items: center;
    justify-content: center;
    padding-left: 14px;
    background: rgba(128, 128, 128, 0.8);
    border-radius: 50%;
}

.lesson {
    flex: 1;
    margin: 100px 46px 0 44px;
    padding: 0 0 0 85px;
    background: #dde2fb;
    border-radius: 22px 22px 0 0;
    color: #222;
}

.lesson-tab {
    width: 252px;
    height: 61px;
    margin-top: -28px;
    display: flex;
    align-items: center;
    justify-content: center;
    background: #fff;
    border: 2px solid #5f87ef;
    border-radius: 10px;
}

.lesson-name {
    margin: 27px 0 0;
    line-height: 54px;
    white-space: nowrap;
    font-size: 40px;
}

.panel-scroll {
    position: absolute;
    top: 0;
    right: 0;
    bottom: 0;
    width: 23px;
    background: #f7f7f7;
}

.panel-thumb {
    position: absolute;
    left: 1px;
    top: 1047px;
    width: 21px;
    height: 331px;
    border-radius: 11px;
    background: #c2c2c2;
}

/* Control bar */
.controlbar {
    height: 123px;
    display: flex;
    align-items: center;
    background: #5a5a5a;
    color: #fff;
    font-size: 50px;
}

.ctl-expand {
    margin-left: 46px;
}

.vm-btn {
    width: 328px;
    height: 106px;
    margin-left: 49px;
    padding-left: 27px;
    display: flex;
    align-items: center;
    gap: 13px;
    background: #8a8a8a;
    border: 2px solid #b5b5b5;
    border-bottom-width: 3px;
    border-radius: 10px;
    font-size: 41px;
    font-weight: 600;
}

.vm-dot {
    width: 32px;
    height: 32px;
    border-radius: 50%;
    background: #6db05f;
}

.vm-caret {
    margin-left: -4px;
    width: 0;
    height: 0;
    border-left: 11px solid transparent;
    border-right: 11px solid transparent;
    border-bottom: 12px solid #fff;
}

.ctl-items {
    margin-left: auto;
    padding-right: 34px;
    display: flex;
    align-items: center;
    gap: 37px;
}

.ctl {
    display: flex;
    align-items: center;
    gap: 17px;
    white-space: nowrap;
}

.ctl-tight {
    gap: 13px;
}

.ctl-off {
    margin-left: -7px;
    gap: 23px;
    color: #c0c0c0;
}

.ctl-next {
    margin-left: -5px;
    gap: 12px;
}

.ctl-gear {
    margin-left: 10px;
}

.ctl-close {
    margin-left: 6px;
    gap: 14px;
}

/* Windows taskbar */
.taskbar {
    height: 120px;
    display: flex;
    align-items: center;
    color: #fff;
    background: linear-gradient(to right,
        #1b2c10 0, #1f2812 230px, #102450 340px, #142461 700px, #2a1f1e 800px,
        #2c2120 1600px, #202020 2000px, #202020 2800px, #1c2238 3080px, #20252a 3280px, #1c2c14 3500px, #222 3840px);
}

.weather {
    width: 1150px;
    padding-left: 54px;
    display: flex;
    align-items: center;
    gap: 21px;
}

.weather-text {
    display: flex;
    flex-direction: column;
    font-size: 28px;
    line-height: 42px;
}

.weather-dim {
    color: #c9c9c9;
}

.tb-app {
    width: 110px;
    height: 100px;
    position: relative;
    display: flex;
    align-items: center;
    justify-content: center;
}

.tb-app-active {
    background: #2d2d2f;
    border-radius: 8px;
}

.tb-pill {
    position: absolute;
    left: 35px;
    bottom: 3px;
    width: 40px;
    height: 8px;
    border-radius: 4px;
    background: #4bb8f5;
}

.tb-dot {
    position: absolute;
    left: 50px;
    bottom: 3px;
    width: 10px;
    height: 8px;
    border-radius: 4px;
    background: #999;
}

.word-w {
    font: bold 24px 'Liberation Sans', sans-serif;
    fill: #fff;
    text-anchor: middle;
}

.win-tray {
    flex: 1;
    display: flex;
    align-items: center;
    padding-left: 468px;
}

.tray-cloud {
    margin-left: 42px;
}

.tray-wifi {
    margin-left: 117px;
}

.tray-sound {
    margin-left: 21px;
}

.tray-batt {
    margin-left: 20px;
}

.win-clock {
    width: 160px;
    margin-left: 18px;
    display: flex;
    flex-direction: column;
    align-items: flex-end;
    gap: 12px;
    font-size: 28px;
    line-height: 36px;
}

.notif-count {
    width: 38px;
    height: 38px;
    margin-left: 19px;
    display: flex;
    align-items: center;
    justify-content: center;
    border-radius: 50%;
    background: #4bb8f5;
    color: #111;
    font-size: 26px;
}
```
